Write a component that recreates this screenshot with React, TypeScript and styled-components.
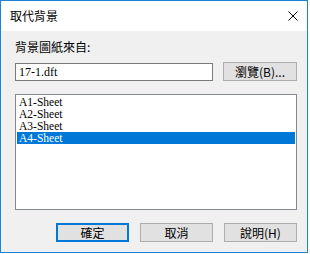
import React from "react";
import styled, { createGlobalStyle } from "styled-components";

const Global = createGlobalStyle`
  html, body { margin: 0; padding: 0; background: #ffffff; }
  * { box-sizing: border-box; }
`;

const cjk = `"Noto Sans CJK TC", "Noto Sans", sans-serif`;
const serif = `"Liberation Serif", "Noto Sans CJK TC", serif`;

const Window = styled.div`
  width: 308px;
  height: 253px;
  border: 1px solid #1883d7;
  background: #f0f0f0;
  display: flex;
  flex-direction: column;
  font-family: ${cjk};
  color: #000;
`;

const TitleBar = styled.div`
  height: 30px;
  background: #ffffff;
  display: flex;
  align-items: center;
  justify-content: space-between;
  padding: 0 8px 0 9px;
  flex-shrink: 0;
`;

const Title = styled.span`
  font-size: 12px;
  line-height: 16px;
`;

const CloseIcon = styled.svg`
  width: 10px;
  height: 10px;
  margin-right: 1px;
`;

const Body = styled.div`
  flex: 1;
  display: flex;
  flex-direction: column;
  padding: 8px 10px 0 14px;
`;

const Label = styled.div`
  font-size: 12px;
  line-height: 16px;
  height: 16px;
`;

const FileRow = styled.div`
  margin-top: 7px;
  height: 19px;
  display: flex;
  align-items: flex-end;
  gap: 10px;
`;

const TextInput = styled.div`
  width: 198px;
  height: 18px;
  border: 1px solid #7a7a7a;
  background: #ffffff;
  font-family: ${serif};
  font-size: 12px;
  line-height: 16px;
  padding-left: 3px;
`;

const Button = styled.div<{ $default?: boolean; $w?: number }>`
  width: ${(p) => p.$w ?? 73}px;
  height: 19px;
  background: #e1e1e1;
  border: ${(p) => (p.$default ? "2px solid #0078d7" : "1px solid #adadad")};
  font-size: 12px;
  display: flex;
  align-items: center;
  justify-content: center;
  line-height: 14px;
  align-self: flex-start;
`;

const List = styled.div`
  margin-top: 13px;
  height: 116px;
  border: 1px solid #828790;
  background: #ffffff;
  padding: 1px;
`;

const Item = styled.div<{ $selected?: boolean }>`
  height: 12px;
  line-height: 12px;
  font-family: ${serif};
  font-size: 11.5px;
  padding-left: 2px;
  background: ${(p) => (p.$selected ? "#0078d7" : "transparent")};
  color: ${(p) => (p.$selected ? "#ffffff" : "#000000")};
`;

const ButtonRow = styled.div`
  margin-top: 13px;
  display: flex;
  justify-content: flex-end;
  gap: 11px;
`;

const items = ["A1-Sheet", "A2-Sheet", "A3-Sheet", "A4-Sheet"];

export default function App() {
  return (
    <>
      <Global />
      <Window>
        <TitleBar>
          <Title>取代背景</Title>
          <CloseIcon viewBox="0 0 10 10">
            <path d="M0.5 0.5 L9.5 9.5 M9.5 0.5 L0.5 9.5" stroke="#000" strokeWidth="1" fill="none" />
          </CloseIcon>
        </TitleBar>
        <Body>
          <Label>背景圖紙來自:</Label>
          <FileRow>
            <TextInput>17-1.dft</TextInput>
            <Button $w={74}>瀏覽(B)...</Button>
          </FileRow>
          <List>
            {items.map((it, i) => (
              <Item key={it} $selected={i === 3}>
                {it}
              </Item>
            ))}
          </List>
          <ButtonRow>
            <Button $default>確定</Button>
            <Button>取消</Button>
            <Button>說明(H)</Button>
          </ButtonRow>
        </Body>
      </Window>
    </>
  );
}
